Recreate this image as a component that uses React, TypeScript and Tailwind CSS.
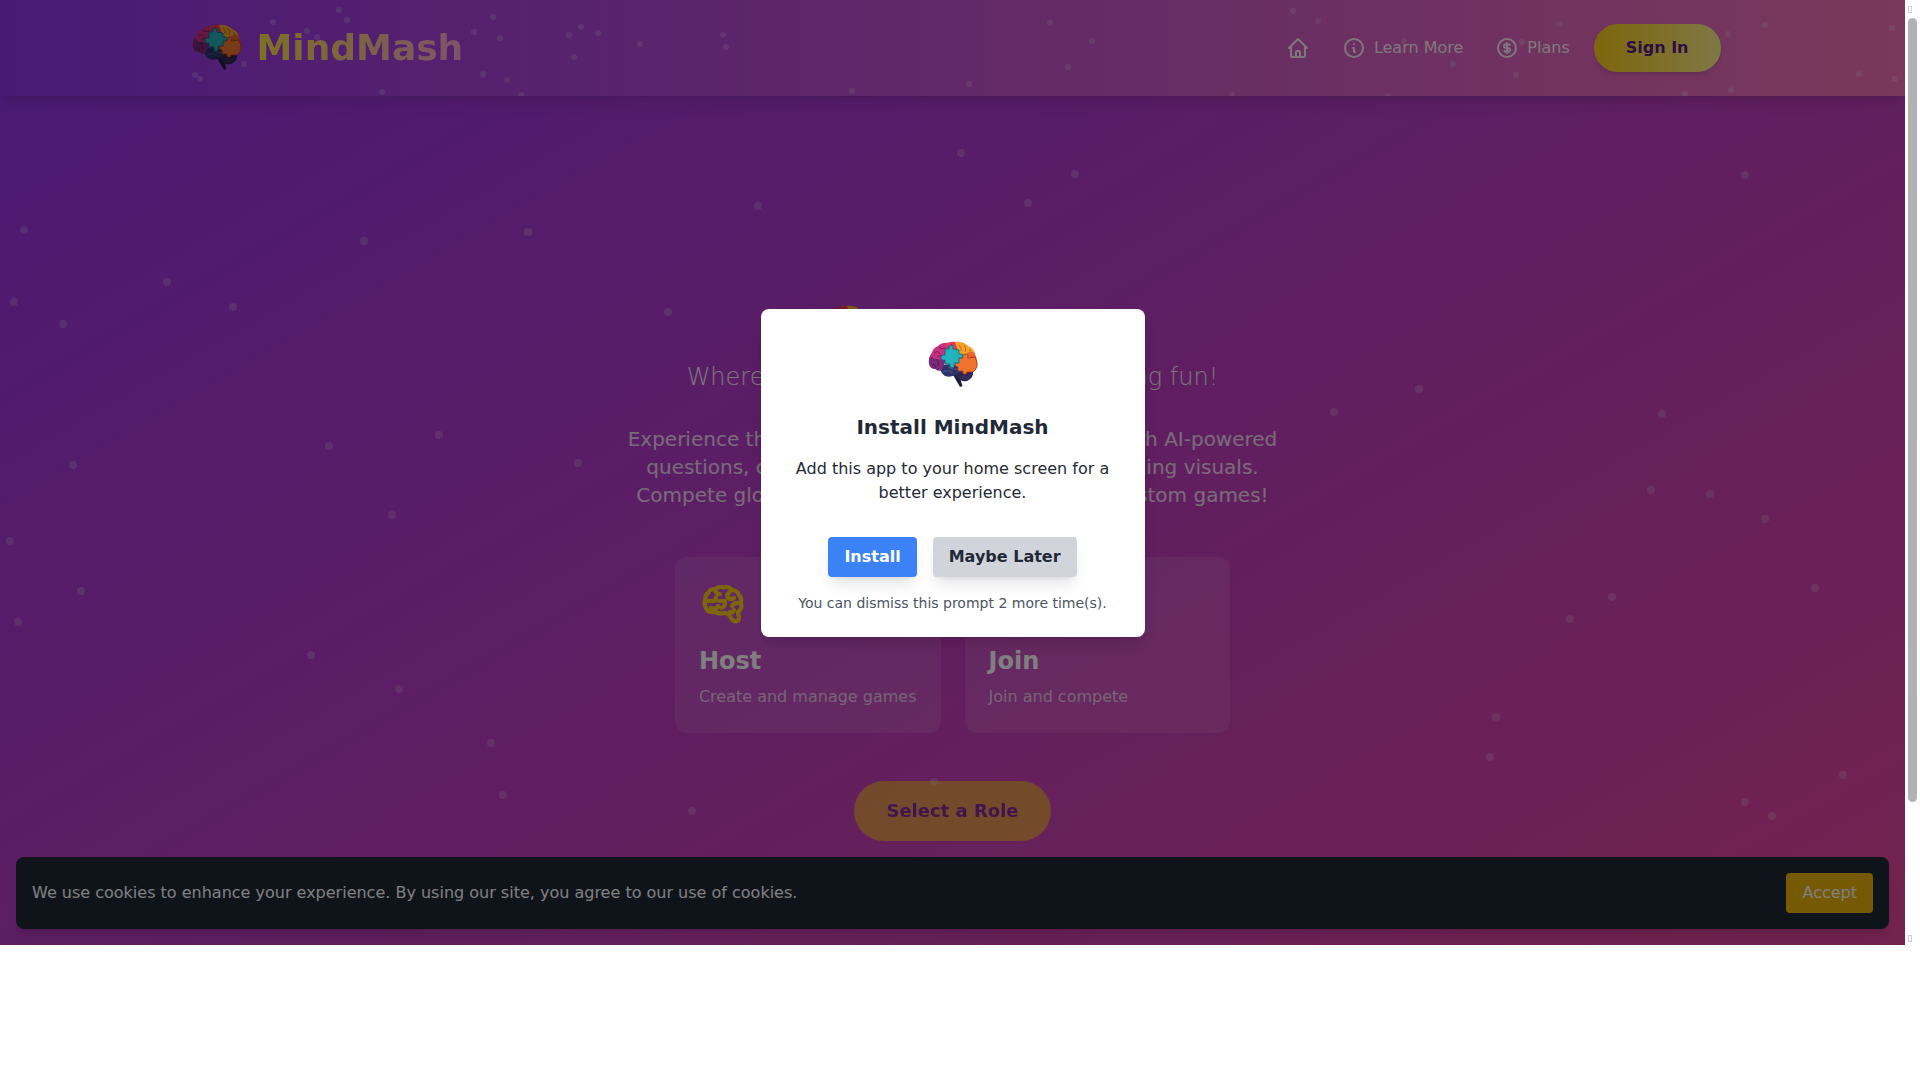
import type { ReactNode } from "react";
import { HiOutlineCurrencyDollar, HiOutlineHome, HiOutlineInformationCircle } from "react-icons/hi";
import { LuUsers } from "react-icons/lu";

const headerDots = [
  [339, 10], [347, 20], [273, 22], [307, 31], [317, 37], [244, 64], [195, 75], [200, 79], [382, 92],
  [474, 32], [493, 17], [500, 38], [483, 74], [507, 80], [521, 95], [569, 35], [581, 27], [598, 33],
  [640, 44], [574, 57], [723, 35], [726, 47], [852, 91], [1050, 23], [1092, 41], [1068, 67], [969, 84],
  [1232, 95], [1293, 11], [1318, 21], [1559, 24], [1404, 41], [1522, 42], [1453, 64], [1516, 75],
  [1388, 96], [1728, 34], [1765, 25], [1892, 28], [1859, 74], [1895, 79], [1731, 90], [1685, 94],
];

const pageDots = [
  [961, 153], [1075, 174], [758, 206], [1028, 203], [24, 230], [364, 241], [528, 232], [167, 282],
  [14, 302], [233, 307], [63, 324], [668, 312], [1745, 175], [1419, 389], [1334, 412], [1662, 414],
  [439, 435], [329, 446], [73, 465], [578, 463], [392, 515], [1651, 490], [1710, 494], [1765, 519],
  [10, 541], [81, 591], [18, 622], [311, 655], [399, 689], [1612, 597], [1570, 619], [1815, 588],
  [491, 743], [503, 795], [692, 811], [934, 782], [1496, 717], [1490, 757], [1843, 775], [1745, 802],
  [1772, 816],
];

function Logo() {
  return (
    <svg viewBox="0 0 64 64" className="w-16 h-16 shrink-0">
      {/* stem and cerebellum */}
      <path d="M31 40 L38 42 L41.500 53 L39 54 L35 47 Z" fill="#1c1b3d" />
      <path d="M36 40 Q45 35 52 38 Q53 45 46 48 Q39 49 35 44 Z" fill="#2a2350" />
      <path d="M39 43 Q46 45 51 41 M39 45.500 Q45 47 49 44" stroke="#4a3a70" strokeWidth=".8" fill="none" />
      <path d="M19 33 Q28 29 41 34 Q42 39 36 41 Q30 45 24 43 Q19 40 19 33 Z" fill="#2b3468" />
      <path d="M22 39 Q29 36 31 40 M27 34 Q33 38 38 35" stroke="#4f5fa0" strokeWidth=".9" fill="none" />
      {/* left lobes */}
      <path d="M11 20 Q7 24 8 31 Q9 36 14 36 Q17 39 21 37 L25 27 L20 18 Z" fill="#7b2a78" />
      <path d="M11 25 Q15 23 16 27 Q19 29 17 33 M12 31 Q14 31 15 35" stroke="#4a1a5a" strokeWidth="1" fill="none" />
      <path d="M10 24 Q10 16 17 13 Q21 9 28 10 L28 18 L21 26 Q15 27 10 24 Z" fill="#c93080" />
      <path d="M13 20 Q17 17 19 21 M18 14 Q21 17 24 15 M16 24 Q19 21 22 23" stroke="#7c1c5e" strokeWidth="1" fill="none" />
      <path d="M24 11 Q29 8 35 9 L38 18 L28 17 Z" fill="#e8385c" />
      <path d="M27 13 Q30 15 31 11" stroke="#9c1f48" strokeWidth="1" fill="none" />
      {/* right lobes */}
      <path d="M34 9 Q42 8 47 13 Q53 15 54 21 L54 27 L38 27 L36 15 Z" fill="#f5a62a" />
      <path d="M38 12 Q41 14 40 18 M43 12 Q46 15 44 19 M49 16 Q50 20 48 23" stroke="#c9641c" strokeWidth="1" fill="none" />
      <path d="M46 20 Q52 17 54 21 Q57 27 55 33 L50 33 Z" fill="#e8622c" />
      {/* puzzle pieces */}
      <path
        d="M37 25 L42 25 Q41 21 44.500 21 Q48 21 46.500 25 L54 24 Q57 29 56 34 Q54 38 52 39 L46 39 Q46 42 43 41 Q41 41 42 38 L37 38 L37 34 Q34 34 34 31 Q35 29 37 30 Z"
        fill="#f0742e"
        stroke="#9c3324"
        strokeWidth=".8"
      />
      <path
        d="M24 16 L28 16 Q27 12 30 12 Q33 12 32 16 L38 17 L38 21 Q42 20 42 23 Q41 26 38 25 L38 30 L33 30 Q34 35 31 35 Q28 35 29 31 L24 31 L24 27 Q20 28 20 24 Q21 21 24 22 Z"
        fill="#22b3bd"
        stroke="#17606f"
        strokeWidth=".8"
      />
    </svg>
  );
}

function BrainIcon() {
  return (
    <svg
      viewBox="0 0 48 48"
      className="w-12 h-12 text-[#facc15]"
      fill="none"
      stroke="currentColor"
      strokeWidth="4.2"
      strokeLinecap="round"
      strokeLinejoin="round"
    >
      <path d="M9 12 Q11 8 16 8 Q20 5 25 6.500 Q30 5 33 9 Q38 9 40 14 Q43 17 42 22 Q44 27 39 31 Q39 33 40 36 Q40 40 37 40.500 Q33 40 31 35 Q29 32 25 32 Q20 33 16 31 Q8 32 6.500 26 Q4.500 22 6.500 18 Q6 14 9 12 Z" />
      <path d="M8 20 H14 Q17 20 17 16 M16 9 Q17 13 21 13 M12 27 Q17 29 19 25 M20 20 H26 V23 Q26 26 22 27 M31 11 Q27 13 29 17 Q31 19 35 17 M41 22 Q35 21 33 25 M31 31 Q34 32 35 29" />
    </svg>
  );
}

function Dots({ points, size }: { points: number[][]; size: number }) {
  return (
    <svg className="absolute inset-0 w-full h-full pointer-events-none">
      {points.map(([x, y]) => (
        <circle key={`${x}-${y}`} cx={x} cy={y} r={size / 2} fill="white" fillOpacity=".2" />
      ))}
    </svg>
  );
}

function Header() {
  return (
    <header className="relative overflow-hidden h-24 shadow-lg bg-[linear-gradient(to_right,#9333ea,#f472b6)]">
      <div className="w-[1536px] h-full mx-auto flex items-center justify-between">
        <div className="flex items-center gap-2">
          <Logo />
          <span className="text-4xl font-bold text-transparent bg-clip-text bg-[linear-gradient(to_right,#fde047,#f9a8d4)]">
            MindMash
          </span>
        </div>
        <nav className="flex items-center text-white/90">
          <a className="mr-8">
            <HiOutlineHome className="w-6 h-6" />
          </a>
          <a className="flex items-center gap-2 mr-8">
            <HiOutlineInformationCircle className="w-6 h-6" />
            Learn More
          </a>
          <a className="flex items-center gap-2 mr-6">
            <HiOutlineCurrencyDollar className="w-6 h-6" />
            Plans
          </a>
          <button className="h-12 px-8 rounded-full font-bold text-[#581c87] shadow-md bg-[linear-gradient(to_right,#facc15,#fef08a)]">
            Sign In
          </button>
        </nav>
      </div>
      <Dots points={headerDots} size={6} />
    </header>
  );
}

function RoleCard({ icon, title, text }: { icon: ReactNode; title: string; text: string }) {
  return (
    <div className="p-6 rounded-xl bg-white/10">
      {icon}
      <h3 className="mt-4 mb-2 text-2xl font-bold">{title}</h3>
      <p className="text-white/70">{text}</p>
    </div>
  );
}

function Hero() {
  return (
    <main className="flex flex-col items-center pt-[201px] text-white text-center">
      <div className="flex items-center gap-2">
        <Logo />
        <span className="text-4xl font-bold text-[#fde047]">MindMash</span>
      </div>
      <p className="mb-8 text-2xl font-light text-white/90">
        Where intelligence meets mind-blowing fun!
      </p>
      <p className="mb-12 text-xl leading-7 whitespace-nowrap text-white/80">
        Experience the ultimate quiz and trivia platform with AI-powered
        <br />
        questions, customizable categories with entertaining visuals.
        <br />
        Compete globally or create and build your own custom games!
      </p>
      <div className="grid grid-cols-2 gap-6 text-left">
        <RoleCard icon={<BrainIcon />} title="Host" text="Create and manage games" />
        <RoleCard
          icon={<LuUsers className="w-12 h-12 text-[#facc15]" />}
          title="Join"
          text="Join and compete"
        />
      </div>
      <button className="mt-12 h-15 px-8 rounded-full text-lg font-bold text-[#581c87] bg-[#facc15] opacity-60">
        Select a Role
      </button>
    </main>
  );
}

function CookieBar() {
  return (
    <div className="absolute bottom-4 left-4 right-4 flex items-center justify-between p-4 rounded-lg text-white bg-[#1f2937] shadow-lg">
      <p>We use cookies to enhance your experience. By using our site, you agree to our use of cookies.</p>
      <button className="px-4 py-2 rounded-sm bg-[#eab308]">Accept</button>
    </div>
  );
}

function InstallDialog() {
  return (
    <div className="absolute inset-0 flex items-center justify-center bg-black/50">
      <div className="w-96 p-6 rounded-lg bg-white shadow-lg text-center text-[#1f2937]">
        <div className="flex justify-center mb-4">
          <Logo />
        </div>
        <h2 className="mb-4 text-xl font-bold">Install MindMash</h2>
        <p className="mb-8">Add this app to your home screen for a better experience.</p>
        <div className="flex justify-center gap-4 font-bold">
          <button className="px-4 py-2 rounded-sm text-white bg-[#3b82f6] shadow-lg">Install</button>
          <button className="px-4 py-2 rounded-sm bg-[#d1d5db] shadow-lg">Maybe Later</button>
        </div>
        <p className="mt-4 text-sm text-[#4b5563]">You can dismiss this prompt 2 more time(s).</p>
      </div>
    </div>
  );
}

function Scrollbar() {
  return (
    <div className="flex-1 flex flex-col justify-between pl-[3px] pt-1.5 pb-[3px] bg-white">
      <div className="w-1 h-[7px] border border-[#d0d0d0]" />
      <div className="w-[9px] h-[784px] mt-[5px] mb-auto rounded-full bg-[#b0b2b5]" />
      <div className="w-1 h-[7px] border border-[#d0d0d0]" />
    </div>
  );
}

export default function App() {
  return (
    <div className="w-[1920px] h-[1080px] bg-white font-['DejaVu_Sans',sans-serif]">
      <div className="flex h-[945px]">
        <div className="relative w-[1905px] h-full overflow-hidden">
          <div className="h-[1096px] bg-[linear-gradient(to_bottom_right,#9333ea,#ec4899)]">
            <Header />
            <Hero />
          </div>
          <Dots points={pageDots} size={8} />
          <CookieBar />
          <InstallDialog />
        </div>
        <Scrollbar />
      </div>
    </div>
  );
}
